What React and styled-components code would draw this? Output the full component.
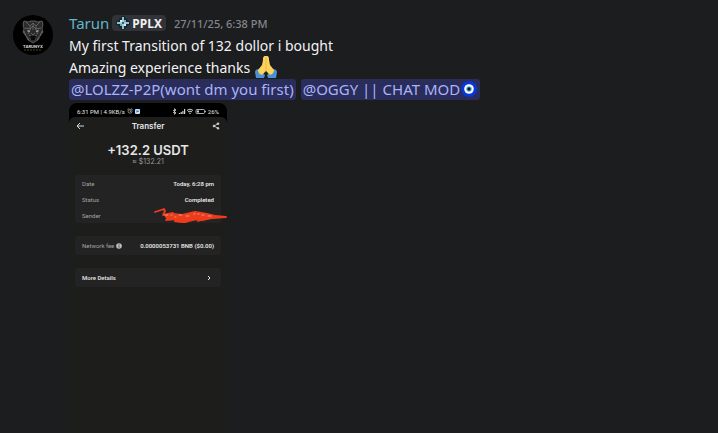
import React from "react";
import styled, { createGlobalStyle } from "styled-components";

const GlobalStyle = createGlobalStyle`
  * {
    box-sizing: border-box;
  }

  body {
    margin: 0;
    background-color: #1c1d1f;
    font-family: "Noto Sans", "Open Sans", sans-serif;
  }
`;

const Message = styled.article`
  display: flex;
  gap: 16px;
  min-height: 100vh;
  padding: 12px 16px 0 13px;
`;

const Avatar = styled.svg`
  flex: none;
  width: 40px;
  height: 40px;
  margin-top: 3px;
`;

const Content = styled.div`
  display: flex;
  flex: 1;
  flex-direction: column;
  align-items: flex-start;
  min-width: 0;
`;

const Header = styled.header`
  display: flex;
  align-items: center;
  height: 22px;
`;

const Author = styled.h3`
  margin: 0;
  font-size: 15px;
  font-weight: 400;
  line-height: 22px;
  color: #62b5cb;
`;

const ServerTag = styled.span`
  display: flex;
  align-items: center;
  gap: 2px;
  height: 16px;
  margin: 0 8px 0 3px;
  padding: 0 4px;
  border-radius: 4px;
  background-color: #323338;
  font-size: 12px;
  font-weight: 700;
  color: #f0f0f2;
`;

const Timestamp = styled.time`
  font-size: 11px;
  font-weight: 500;
  color: #84858c;
`;

const Text = styled.p`
  display: flex;
  align-items: center;
  gap: 5px;
  height: 22px;
  margin: 0;
  font-size: 14px;
  white-space: nowrap;
  color: #f2f2f4;
`;

const Mention = styled.a`
  display: flex;
  align-items: center;
  height: 21px;
  padding: 0 2px;
  border-radius: 3px;
  background-color: #2a2c5a;
  font-size: 15px;
  text-decoration: none;
  color: #a9b3f8;
`;

const Phone = styled.section`
  display: flex;
  flex: 1;
  flex-direction: column;
  width: 158px;
  margin-top: 3px;
  overflow: hidden;
  border-radius: 8px 8px 0 0;
  background-color: #000;
  font-family: Roboto, sans-serif;
  font-size: 6px;
  color: #e6e6e6;
`;

const StatusBar = styled.div`
  display: flex;
  align-items: center;
  justify-content: space-between;
  height: 14px;
  padding: 2px 8px 0;
`;

const StatusGroup = styled.div`
  display: flex;
  align-items: center;
  gap: 2px;
`;

const Screen = styled.div`
  flex: 1;
  padding: 0 6px;
  border-radius: 6px 6px 0 0;
  background-color: #1d1d1c;
`;

const TopBar = styled.div`
  display: flex;
  align-items: center;
  justify-content: space-between;
  height: 18px;
`;

const Title = styled.h4`
  margin: 0;
  font-family: Inter, sans-serif;
  font-size: 8px;
  font-weight: 600;
`;

const IconButton = styled.button`
  display: flex;
  align-items: center;
  justify-content: center;
  width: 10px;
  height: 10px;
  padding: 0;
  border: none;
  background: none;
  color: #d8d8d8;
  cursor: pointer;
`;

const Amount = styled.div`
  padding: 7px 0 9px;
  font-family: Inter, sans-serif;
  text-align: center;
`;

const AmountValue = styled.div`
  font-size: 13px;
  font-weight: 600;
  line-height: 16px;
`;

const AmountFiat = styled.div`
  font-size: 7px;
  line-height: 8px;
  color: #9a9a9a;
`;

const Card = styled.div`
  margin-bottom: 13px;
  padding: 0 7px;
  border-radius: 3px;
  background-color: #232323;
`;

const Row = styled.div`
  display: flex;
  align-items: center;
  justify-content: space-between;
  height: ${(props) => (props.$single ? "19px" : "16px")};
`;

const Label = styled.span`
  display: flex;
  align-items: center;
  gap: 2px;
  color: #a3a3a3;
`;

const Value = styled.span`
  font-weight: 600;
`;

const DetailsButton = styled.button`
  display: flex;
  align-items: center;
  justify-content: space-between;
  width: 100%;
  height: 19px;
  padding: 0;
  border: none;
  background: none;
  font: inherit;
  font-weight: 500;
  color: inherit;
  cursor: pointer;
`;

const Redacted = styled.span`
  display: flex;
  width: 74px;
  height: 16px;
  margin-right: -13px;
`;

const AvatarImage = () => (
  <Avatar viewBox="0 0 40 40" role="img" aria-label="Tarun">
    <circle cx="20" cy="20" r="20" fill="#000" />
    <g fill="none" stroke="#777" strokeWidth=".7" strokeLinejoin="round">
      <path d="M10 9l1-3 4 1 3-1h4l3 1 4-1 1 3-1 5 1 3-3 4-2 4-5 3-5-3-2-4-3-4 1-3z" fill="#2b2b2b" />
      <path d="M13 7l4 4 3-3 3 3 4-4M12 13l5 1 3-3 3 3 5-1M14 16l3 1M26 16l-3 1" />
      <path d="M17 11v4l-2 4M23 11v4l2 4M20 9v6M18 18l2 2 2-2M16 20l2 1v4M24 20l-2 1v4" />
      <path d="M11 16l2 5M29 16l-2 5M14 22l2 3M26 22l-2 3" />
    </g>
    <path d="M17 21h6l-1 4h-4z" fill="#090909" />
    <path d="M14 15l3 1-1 1zM26 15l-3 1 1 1z" fill="#ccc" />
    <text x="20" y="33" textAnchor="middle" fontFamily="Inter, sans-serif" fontSize="4" fontWeight="700" fill="#ddd">
      TARUNYX
    </text>
    <path d="M11 35h18" stroke="#756332" strokeWidth=".7" strokeDasharray="2 1" />
  </Avatar>
);

const TagIcon = () => (
  <svg width="14" height="14" viewBox="0 0 14 14">
    <path d="M5 0h4v2h2v2h1v1h2v4h-2v1h-1v2H9v2H5v-2H3v-2H2V9H0V5h2V4h1V2h2z" fill="#16262f" />
    <path d="M6 1h2v3H6zM6 10h2v3H6zM1 6h3v2H1zM10 6h3v2h-3z" fill="#86c4d6" />
    <path d="M4 4h2v2H4zM8 8h2v2H8z" fill="#d5eef2" />
    <path d="M8 4h2v2H8zM4 8h2v2H4z" fill="#62abc4" />
    <path d="M6 4h2v2H6zM6 8h2v2H6zM4 6h2v2H4zM8 6h2v2H8z" fill="#a8ccd4" />
    <path d="M6 6h2v2H6z" fill="#4d555c" />
  </svg>
);

const PrayIcon = () => (
  <svg width="22" height="22" viewBox="0 0 22 22" role="img" aria-label="Folded hands">
    <path d="M0 16c0-2 2-3 4-3l6 6-1 3H1zM22 16c0-2-2-3-4-3l-6 6 1 3h8z" fill="#4c91d2" />
    <path d="M10.5 0C8 0 8 2 8 4L7 9l-4 5c0 3 3 6 5 4l3-3 3 3c2 2 5-1 5-4l-4-5-1-5c0-2 0-4-2.5-4z" fill="#ffd35b" />
    <path d="M11 1v14" stroke="#e5ab42" strokeWidth=".8" />
  </svg>
);

const EyeIcon = () => (
  <svg width="18" height="18" viewBox="0 0 18 18" role="img" aria-label="Nazar">
    <circle cx="9" cy="9" r="8" fill="#0736d9" />
    <circle cx="9" cy="9" r="4.8" fill="#fff" />
    <circle cx="9" cy="9" r="2.8" fill="#5fb5df" />
    <circle cx="9" cy="9" r="1.7" fill="#10151c" />
  </svg>
);

const BackIcon = () => (
  <svg width="9" height="8" viewBox="0 0 9 8" fill="none" stroke="currentColor">
    <path d="M4 1L1 4l3 3M1 4h7" />
  </svg>
);

const ShareIcon = () => (
  <svg width="8" height="8" viewBox="0 0 8 8" fill="currentColor" stroke="currentColor" strokeWidth=".8">
    <path d="M6 1.7L2 4l4 2.3" fill="none" />
    <circle cx="6" cy="1.7" r=".9" />
    <circle cx="2" cy="4" r=".9" />
    <circle cx="6" cy="6.3" r=".9" />
  </svg>
);

const AlarmIcon = () => (
  <svg width="6" height="6" viewBox="0 0 6 6" fill="none" stroke="#bbb" strokeWidth=".7">
    <circle cx="3" cy="3.2" r="2" />
    <path d="M.4 1.4L1.6.4M5.6 1.4L4.4.4M3 2v1.4h1" />
  </svg>
);

const AppIcon = () => (
  <svg width="5" height="5" viewBox="0 0 5 5">
    <rect width="5" height="5" rx="1" fill="#c9e3fb" />
    <path d="M1.3 1.5h2.4v1.6H2.5l-1 .7z" fill="#2376be" />
  </svg>
);

const SignalIcons = () => (
  <svg width="34" height="7" viewBox="0 0 34 7" fill="none" stroke="#d5d5d5" strokeWidth=".8">
    <path d="M1 2l3 3-1.5 1.3V.7L4 2 1 5" />
    <path d="M7.5 6V5M9.2 6V4M10.9 6V3M12.6 6V1" strokeWidth="1.2" />
    <path d="M15 2.4q3-2.6 6 0M16 3.9q2-1.6 4 0M17.2 5.3h1.6" strokeWidth="1" />
    <rect x="24" y="1.5" width="8.5" height="4" rx="1" />
    <path d="M25 2.5h2v2h-2z" fill="#d5d5d5" stroke="none" />
    <path d="M33.5 2.8v1.4" />
  </svg>
);

const InfoIcon = () => (
  <svg width="6" height="6" viewBox="0 0 6 6">
    <circle cx="3" cy="3" r="2.8" fill="#c0c0c0" />
    <path d="M3 1.2v.8M3 2.6v2" stroke="#242424" strokeWidth=".8" />
  </svg>
);

const ChevronIcon = () => (
  <svg width="10" height="6" viewBox="0 0 10 6" fill="none" stroke="currentColor">
    <path d="M4 1l2 2-2 2" />
  </svg>
);

const Scribble = () => (
  <svg width="74" height="16" viewBox="0 0 74 16" fill="none" strokeLinecap="round" strokeLinejoin="round">
    <path d="M2 5l9-3 1 2-2 4 10-2" stroke="#ed3b1c" strokeWidth="1.8" />
    <path d="M11 8l9-2 9 1 13-3 12 2 8 2 11 1v2l-14 1-10 2-11-1-7 3-10-1 2-3-9 1z" fill="#ed3b1c" />
    <path d="M18 11l-5 2 10-1M22 14l11 1 11-3M53 12l-8 2M58 10h15" stroke="#ed3b1c" strokeWidth="1.8" />
    <path d="M12 8h3M18 8h1M22 10h1M26 8h3M33 9h3M41 7h1M45 7h1M49 8h2M55 9h3" stroke="#dfb8ad" strokeWidth=".8" />
  </svg>
);

const details = [
  { label: "Date", value: "Today, 6:28 pm" },
  { label: "Status", value: "Completed" },
];

function App() {
  return (
    <>
      <GlobalStyle />
      <Message>
        <AvatarImage />
        <Content>
          <Header>
            <Author>Tarun</Author>
            <ServerTag>
              <TagIcon />
              PPLX
            </ServerTag>
            <Timestamp dateTime="2025-11-27T18:38">27/11/25, 6:38 PM</Timestamp>
          </Header>
          <Text>My first Transition of 132 dollor i bought</Text>
          <Text>
            Amazing experience thanks
            <PrayIcon />
          </Text>
          <Text>
            <Mention href="#">@LOLZZ-P2P(wont dm you first)</Mention>
            <Mention href="#">
              @OGGY || CHAT MOD
              <EyeIcon />
            </Mention>
          </Text>

          <Phone>
            <StatusBar>
              <StatusGroup>
                6:31 PM | 4.9KB/s
                <AlarmIcon />
                <AppIcon />
              </StatusGroup>
              <StatusGroup>
                <SignalIcons />
                26%
              </StatusGroup>
            </StatusBar>
            <Screen>
              <TopBar>
                <IconButton aria-label="Back">
                  <BackIcon />
                </IconButton>
                <Title>Transfer</Title>
                <IconButton aria-label="Share">
                  <ShareIcon />
                </IconButton>
              </TopBar>
              <Amount>
                <AmountValue>+132.2 USDT</AmountValue>
                <AmountFiat>≈ $132.21</AmountFiat>
              </Amount>
              <Card>
                {details.map((item) => (
                  <Row key={item.label}>
                    <Label>{item.label}</Label>
                    <Value>{item.value}</Value>
                  </Row>
                ))}
                <Row>
                  <Label>Sender</Label>
                  <Redacted>
                    <Scribble />
                  </Redacted>
                </Row>
              </Card>
              <Card>
                <Row $single>
                  <Label>
                    Network fee
                    <InfoIcon />
                  </Label>
                  <Value>0.0000053731 BNB ($0.00)</Value>
                </Row>
              </Card>
              <Card>
                <DetailsButton>
                  More Details
                  <ChevronIcon />
                </DetailsButton>
              </Card>
            </Screen>
          </Phone>
        </Content>
      </Message>
    </>
  );
}

export default App;
